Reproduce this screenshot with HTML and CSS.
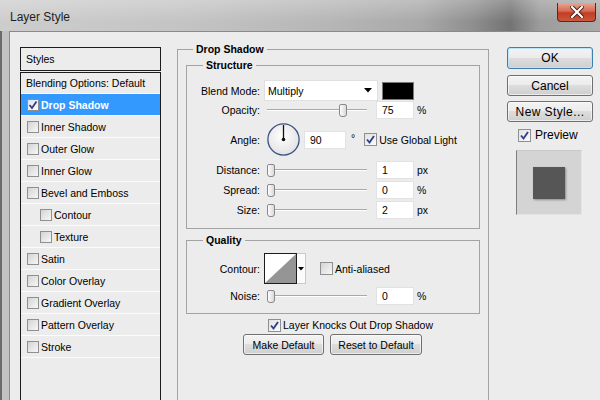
FILE: index.html
```html
<!DOCTYPE html>
<html lang="en">
    <head>
        <meta charset="UTF-8" />
        <title>Layer Style</title>
        <link rel="stylesheet" href="styles.css">
    </head>
    <body>
        <div class="window">
            <div class="titlebar">
                <span class="title">Layer Style</span>
                <span class="close-btn">
                    <svg width="14" height="12" viewBox="0 0 14 12">
                        <path d="M2 1 L12 11 M12 1 L2 11" stroke="#4a1a12" stroke-width="4" stroke-linecap="square" />
                        <path d="M2 1 L12 11 M12 1 L2 11" stroke="#fff" stroke-width="2.2" stroke-linecap="square" />
                    </svg>
                </span>
            </div>
            <div class="frame">
                <div class="client">
                    <!-- left list of effects -->
                    <div class="styles-panel">
                        <div class="styles-head">Styles</div>
                        <ul class="styles-list">
                            <li class="item plain">Blending Options: Default</li>
                            <li class="item selected"><span class="cb small checked"><svg width="10" height="10" viewBox="0 0 10 10"><path d="M1.5 5 L4 8 L8.5 1.5" fill="none" stroke="#2f3f8c" stroke-width="1.8" /></svg></span>Drop Shadow</li>
                            <li class="item"><span class="cb small"></span>Inner Shadow</li>
                            <li class="item"><span class="cb small"></span>Outer Glow</li>
                            <li class="item"><span class="cb small"></span>Inner Glow</li>
                            <li class="item"><span class="cb small"></span>Bevel and Emboss</li>
                            <li class="item sub"><span class="cb small"></span>Contour</li>
                            <li class="item sub"><span class="cb small"></span>Texture</li>
                            <li class="item"><span class="cb small"></span>Satin</li>
                            <li class="item"><span class="cb small"></span>Color Overlay</li>
                            <li class="item"><span class="cb small"></span>Gradient Overlay</li>
                            <li class="item"><span class="cb small"></span>Pattern Overlay</li>
                            <li class="item"><span class="cb small"></span>Stroke</li>
                        </ul>
                    </div>

                    <fieldset class="group main">
                        <legend>Drop Shadow</legend>

                        <fieldset class="group inner structure">
                            <legend>Structure</legend>
                            <div class="row blend">
                                <span class="label">Blend Mode:</span>
                                <div class="select">
                                    <span>Multiply</span>
                                    <svg width="8" height="5" viewBox="0 0 8 5"><path d="M0 0 H8 L4 4.5 Z" fill="#000" /></svg>
                                </div>
                                <span class="swatch"></span>
                            </div>
                            <div class="row opacity">
                                <span class="label">Opacity:</span>
                                <div class="slider"><span class="thumb" style="margin-left: 72px"></span></div>
                                <span class="num">75</span>
                                <span class="unit">%</span>
                            </div>
                            <div class="row angle">
                                <span class="label">Angle:</span>
                                <svg class="dial" width="33" height="33" viewBox="0 0 33 33">
                                    <defs>
                                        <radialGradient id="dialfill" cx="0.45" cy="0.4" r="0.6">
                                            <stop offset="0" stop-color="#ffffff" />
                                            <stop offset="1" stop-color="#e2e2e2" />
                                        </radialGradient>
                                    </defs>
                                    <circle cx="16.5" cy="16.5" r="15.6" fill="url(#dialfill)" stroke="#3f5085" stroke-width="1.3" />
                                    <path d="M16.5 16.5 V2" stroke="#111" stroke-width="1.3" />
                                    <circle cx="16.5" cy="16.5" r="1.8" fill="#111" />
                                </svg>
                                <span class="num wide">90</span>
                                <span class="deg">°</span>
                                <span class="cb checked global"><svg width="11" height="11" viewBox="0 0 11 11"><path d="M2 5.5 L4.5 8.5 L9 2" fill="none" stroke="#2f3f8c" stroke-width="1.9" /></svg></span>
                                <span class="cb-text">Use Global Light</span>
                            </div>
                            <div class="row distance">
                                <span class="label">Distance:</span>
                                <div class="slider"><span class="thumb" style="margin-left: 0px"></span></div>
                                <span class="num">1</span>
                                <span class="unit">px</span>
                            </div>
                            <div class="row">
                                <span class="label">Spread:</span>
                                <div class="slider"><span class="thumb" style="margin-left: 0px"></span></div>
                                <span class="num">0</span>
                                <span class="unit">%</span>
                            </div>
                            <div class="row">
                                <span class="label">Size:</span>
                                <div class="slider"><span class="thumb" style="margin-left: 0px"></span></div>
                                <span class="num">2</span>
                                <span class="unit">px</span>
                            </div>
                        </fieldset>

                        <fieldset class="group inner quality">
                            <legend>Quality</legend>
                            <div class="row contour-row">
                                <span class="label">Contour:</span>
                                <div class="contour">
                                    <svg class="curve" width="31" height="29" viewBox="0 0 31 29">
                                        <rect width="31" height="29" fill="#fff" />
                                        <path d="M0 29 L31 0 V29 Z" fill="#959595" />
                                    </svg>
                                    <span class="contour-drop">
                                        <svg width="6" height="4" viewBox="0 0 6 4"><path d="M0 0 H6 L3 3.5 Z" fill="#000" /></svg>
                                    </span>
                                </div>
                                <span class="cb anti"></span>
                                <span class="cb-text">Anti-aliased</span>
                            </div>
                            <div class="row noise">
                                <span class="label">Noise:</span>
                                <div class="slider"><span class="thumb" style="margin-left: 0px"></span></div>
                                <span class="num">0</span>
                                <span class="unit">%</span>
                            </div>
                        </fieldset>

                        <div class="knock-row">
                            <span class="cb checked"><svg width="11" height="11" viewBox="0 0 11 11"><path d="M2 5.5 L4.5 8.5 L9 2" fill="none" stroke="#2f3f8c" stroke-width="1.9" /></svg></span>
                            <span class="cb-text">Layer Knocks Out Drop Shadow</span>
                        </div>
                        <div class="default-btns">
                            <button class="btn small make">Make Default</button>
                            <button class="btn small reset">Reset to Default</button>
                        </div>
                    </fieldset>

                    <!-- right column -->
                    <div class="side">
                        <button class="btn ok">OK</button>
                        <button class="btn cancel">Cancel</button>
                        <button class="btn new">New Style...</button>
                        <div class="preview-row">
                            <span class="cb checked"><svg width="11" height="11" viewBox="0 0 11 11"><path d="M2 5.5 L4.5 8.5 L9 2" fill="none" stroke="#2f3f8c" stroke-width="1.9" /></svg></span>
                            <span class="preview-label">Preview</span>
                        </div>
                        <div class="preview">
                            <span class="preview-square"></span>
                        </div>
                    </div>
                </div>
            </div>
        </div>
    </body>
</html>
```

FILE: styles.css
```css
body {
    margin: 0;
    width: 600px;
    height: 400px;
    overflow: hidden;
    font-family: "Liberation Sans", Arial, sans-serif;
    font-size: 10.5px;
    color: #000;
    background: #6f6f6f;
}
.window {
    width: 600px;
    height: 400px;
    display: flex;
    flex-direction: column;
    overflow: hidden;
}
.titlebar {
    height: 31px;
    flex: none;
    display: flex;
    align-items: flex-start;
    justify-content: space-between;
    background:
        linear-gradient(to bottom, rgba(255, 255, 255, 0.25), rgba(255, 255, 255, 0) 70%),
        linear-gradient(to right, #cdcdcd 0, #c4c4c4 30%, #b6b6b6 55%, #a9a9a9 70%, #8e8e8e 79%, #737373 85%, #9c9c9c 90%, #aaaaaa 100%);
}
.title {
    margin: 10px 0 0 10px;
    font-size: 12px;
    color: #1e1e1e;
}
.close-btn {
    width: 39px;
    height: 19px;
    margin: 3px 4px 0 0;
    box-sizing: border-box;
    border: 1px solid #5e251b;
    border-top: none;
    border-radius: 0 0 4px 4px;
    background: linear-gradient(to bottom, #e6a793 0, #d66a52 45%, #c23c24 55%, #c85a3e 100%);
    display: flex;
    align-items: center;
    justify-content: center;
}
.frame {
    flex: 1;
    min-height: 0;
    display: flex;
    padding-left: 9px;
    background: linear-gradient(to right, #6a6a6a 0, #6a6a6a 2px, #c2c2c2 2px, #c2c2c2 9px);
}
.client {
    flex: 1;
    display: flex;
    align-items: flex-start;
    padding: 15px 0 0 10px;
    background: #ececec;
    border-top: 1px solid #8a8a8a;
    border-left: 1px solid #8a8a8a;
}

/* styles list */
.styles-panel {
    width: 141px;
    flex: none;
}
.styles-head {
    height: 22px;
    line-height: 22px;
    padding-left: 5px;
    border: 1px solid #1c1c1c;
}
.styles-list {
    list-style: none;
    margin: 1px 0 0;
    padding: 0;
    height: 340px;
    border: 1px solid #1c1c1c;
}
.item {
    height: 21px;
    display: flex;
    align-items: center;
    padding-left: 6px;
    border-bottom: 1px solid #fbfbfb;
}
.item.plain {
    height: 20px;
    padding-left: 5px;
}
.item.sub {
    padding-left: 19px;
}
.item.selected {
    background: #3399ff;
    color: #fff;
    font-weight: bold;
}
.cb {
    width: 13px;
    height: 13px;
    flex: none;
    box-sizing: border-box;
    border: 1px solid #8e8f8f;
    background: linear-gradient(135deg, #d4d4d4, #f7f7f7);
    display: flex;
    align-items: center;
    justify-content: center;
}
.cb.small {
    width: 12px;
    height: 12px;
    margin-right: 2px;
}
.cb.checked {
    background: linear-gradient(135deg, #e2e2e2, #fbfbfb);
}
.cb-text {
    margin-left: 2px;
    white-space: nowrap;
}

/* group boxes */
.group {
    margin: 0;
    padding: 0;
    min-width: 0;
    border: 1px solid #a3a3a3;
}
.group legend {
    padding: 0 3px;
    font-weight: bold;
    line-height: 13px;
}
.main {
    width: 310px;
    height: 380px;
    flex: none;
    margin: -4px 0 0 16px;
}
.main > legend {
    margin-left: 15px;
}
.inner {
    margin: 0 8px;
}
.inner > legend {
    margin-left: 16px;
}
.structure {
    margin-top: 3px;
    padding: 8px 0 9px;
}
.quality {
    margin-top: 5px;
    padding: 6px 0 8px;
}
.row {
    display: flex;
    align-items: center;
    height: 18px;
    margin-top: 2px;
}
.row.blend {
    height: 21px;
    margin-top: 0;
}
.row.opacity {
    margin-top: 0;
}
.row.angle {
    height: 33px;
    margin-top: 4px;
}
.row.distance {
    margin-top: 5px;
}
.row.contour-row {
    height: 31px;
    margin-top: 0;
}
.row.noise {
    margin-top: 3px;
}
.label {
    width: 73px;
    flex: none;
    margin-right: 4px;
    text-align: right;
}
.select {
    width: 114px;
    height: 21px;
    box-sizing: border-box;
    padding: 0 5px 0 3px;
    background: #fff;
    border: 1px solid #e0e0e0;
    display: flex;
    align-items: center;
    justify-content: space-between;
}
.swatch {
    width: 32px;
    height: 18px;
    margin-left: 4px;
    box-sizing: border-box;
    background: #000;
    border: 1px solid #7a7a7a;
}
.slider {
    width: 100px;
    height: 14px;
    margin-left: 3px;
    display: flex;
    align-items: center;
    background: linear-gradient(to bottom, transparent 6px, #a9a9a9 6px, #a9a9a9 7px, #fff 7px, #fff 8px, transparent 8px);
}
.thumb {
    width: 8px;
    height: 13px;
    box-sizing: border-box;
    border: 1px solid #888;
    border-radius: 2px 2px 3px 3px;
    background: linear-gradient(to right, #fdfdfd, #d9d9d9);
}
.num {
    width: 38px;
    height: 18px;
    margin-left: 9px;
    padding-left: 5px;
    box-sizing: border-box;
    background: #fff;
    border: 1px solid #e2e2e2;
    line-height: 16px;
}
.num.wide {
    width: 42px;
    margin-left: 4px;
}
.unit {
    margin-left: 3px;
}
.dial {
    margin-left: 3px;
    flex: none;
}
.deg {
    margin-left: 5px;
    margin-bottom: 4px;
}
.cb.global {
    margin-left: 9px;
}
.contour {
    display: flex;
    height: 31px;
    margin-left: 0;
}
.curve {
    border: 1px solid #1c1c1c;
}
.contour-drop {
    width: 9px;
    box-sizing: border-box;
    background: #fbfbfb;
    border: 1px solid #c9c9c9;
    border-left: none;
    display: flex;
    align-items: center;
    justify-content: center;
}
.cb.anti {
    margin-left: 14px;
}
.knock-row {
    display: flex;
    align-items: center;
    height: 18px;
    margin: 2px 8px 0;
    padding-left: 82px;
}
.default-btns {
    display: flex;
    gap: 6px;
    margin-left: 65px;
}

/* buttons */
.btn {
    box-sizing: border-box;
    height: 21px;
    padding: 0;
    font-family: "Liberation Sans", Arial, sans-serif;
    font-size: 12px;
    color: #000;
    border: 1px solid #707070;
    border-radius: 3px;
    background: linear-gradient(to bottom, #f3f3f3 0, #ebebeb 50%, #dddddd 50%, #cfcfcf 100%);
    box-shadow: inset 0 0 0 1px rgba(255, 255, 255, 0.6);
}
.btn.small {
    font-size: 10.5px;
}
.btn.make {
    width: 81px;
}
.btn.reset {
    width: 92px;
}
.side {
    width: 86px;
    flex: none;
    margin-left: 18px;
    display: flex;
    flex-direction: column;
}
.btn.ok {
    height: 22px;
    border-color: #3c7fb1;
    box-shadow: inset 0 0 0 1px #bfe3f6;
}
.btn.cancel {
    margin-top: 6px;
}
.btn.new {
    margin-top: 5px;
    letter-spacing: 0.4px;
}
.preview-row {
    display: flex;
    align-items: center;
    height: 18px;
    margin-top: 4px;
    padding-left: 11px;
}
.preview-label {
    margin-left: 4px;
    font-size: 12px;
}
.preview {
    width: 66px;
    height: 65px;
    margin: 6px 0 0 9px;
    box-sizing: border-box;
    background: #d4d4d4;
    border: 1px solid #e4e4e4;
    border-left-color: #7d7d7d;
    border-top-color: #c9c9c9;
    display: flex;
    align-items: center;
    justify-content: center;
}
.preview-square {
    width: 32px;
    height: 32px;
    background: #565656;
    box-shadow: 1px 1px 2px rgba(0, 0, 0, 0.35);
}
```
